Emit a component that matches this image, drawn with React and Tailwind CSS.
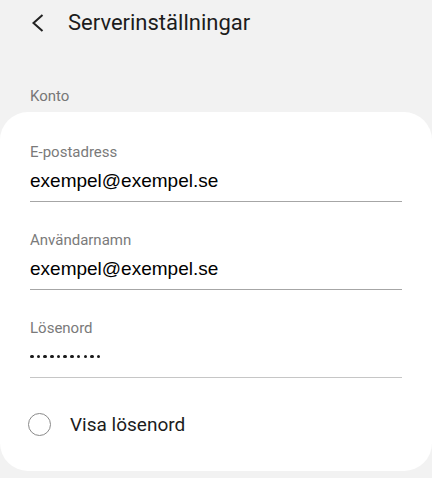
import React, { useState } from "react";

const fields = [
  { label: "E-postadress", value: "exempel@exempel.se" },
  { label: "Användarnamn", value: "exempel@exempel.se" },
];

function Field({ label, children, lineClass }) {
  return (
    <div className={`border-b ${lineClass} pb-[8px]`}>
      <p className="text-[15px] leading-[20px] text-[#7a7a7a]">{label}</p>
      <div className="mt-[7px] h-[24px] flex items-center">{children}</div>
    </div>
  );
}

function App() {
  const [showPassword, setShowPassword] = useState(false);

  return (
    <div
      className="min-h-screen w-[432px] h-[478px] bg-[#f2f2f2] overflow-hidden"
      style={{ fontFamily: "Roboto, 'Liberation Sans', sans-serif" }}
    >
      <div className="flex items-center h-[46px]">
        <svg
          className="ml-[30px] w-[16px] h-[20px]"
          viewBox="0 0 16 20"
          fill="none"
          stroke="#222"
          strokeWidth="2"
        >
          <path d="M12.5 2 L3.5 10 L12.5 18" />
        </svg>
        <h1 className="ml-[22px] text-[22px] leading-[28px] text-[#1c1c1c]">
          Serverinställningar
        </h1>
      </div>

      <p className="mt-[40px] pl-[30px] text-[15px] leading-[20px] text-[#777]">
        Konto
      </p>

      <div className="mt-[6px] bg-white rounded-[28px] px-[30px] pt-[30px]">
        <div className="flex flex-col gap-[28px]">
          {fields.map((f) => (
            <Field key={f.label} label={f.label} lineClass="border-[#a6a6a6]">
              <span className="text-[19px] leading-[24px] text-black font-['Liberation_Sans']">
                {f.value}
              </span>
            </Field>
          ))}
          <Field label="Lösenord" lineClass="border-[#c6c6c6]">
            <div className="flex gap-[3.2px] mt-[-2px] pt-[1px]">
              {Array.from({ length: 11 }).map((_, i) => (
                <span key={i} className="w-[3.5px] h-[3.5px] rounded-full bg-[#1a1a1a]" />
              ))}
            </div>
          </Field>
        </div>

        <button
          onClick={() => setShowPassword(!showPassword)}
          className="flex items-center h-[93px] w-full text-left"
        >
          <span className="w-[23px] h-[23px] rounded-full border border-[#8a8a8a] shrink-0 -ml-[2px]" />
          <span className="ml-[19px] text-[19px] leading-[24px] text-[#1c1c1c]">
            Visa lösenord
          </span>
        </button>
      </div>
    </div>
  );
}

export default App;
